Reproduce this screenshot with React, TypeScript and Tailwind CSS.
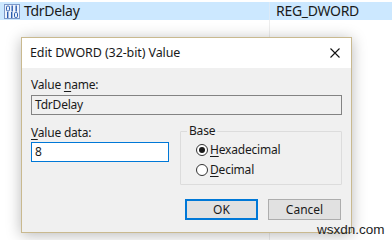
import React from "react"

const ui = "font-['Noto_Sans',sans-serif]"

function BinIcon() {
  // registry REG_DWORD icon: "011 / 110" bits in blue
  const zero = (x: number, y: number) => (
    <rect x={x + 0.5} y={y + 0.5} width={3} height={5} rx={1.2} fill="none" stroke="#2a5db0" strokeWidth={1} />
  )
  const one = (x: number, y: number) => <rect x={x + 1} y={y} width={1.4} height={6} fill="#2a5db0" />
  return (
    <svg width="16" height="15" viewBox="0 0 16 15">
      <rect x="0.5" y="0.5" width="15" height="14" fill="#eef3fb" stroke="#7c98c8" />
      {zero(2, 1.5)}
      {one(6.5, 1.5)}
      {one(10.5, 1.5)}
      {one(2, 8)}
      {one(6, 8)}
      {zero(10, 8)}
    </svg>
  )
}

function Radio({ checked, label, hot }: { checked?: boolean; label: string; hot: number }) {
  return (
    <div className="flex h-[16px] items-center gap-[2px] leading-[16px]">
      <span className="flex h-[12px] w-[12px] items-center justify-center rounded-full border border-[#333] bg-white">
        {checked && <span className="h-[6px] w-[6px] rounded-full bg-[#1a1a1a]" />}
      </span>
      <span>
        {label.slice(0, hot)}
        <span className="underline underline-offset-2">{label[hot]}</span>
        {label.slice(hot + 1)}
      </span>
    </div>
  )
}

export default function App() {
  return (
    <div className={`relative h-[240px] w-[392px] overflow-hidden bg-white text-[#1a1a1a] ${ui}`}>
      {/* list view behind */}
      <div className="flex h-full flex-col pt-[2px]">
        <div className="flex h-[18px] bg-[#cce8ff] text-[14px] leading-[18px]">
          <div className="flex w-[270px] items-center gap-[4px] border-r border-[#dceaf7] pl-[4px]">
            <BinIcon />
            <span className="tracking-[-0.3px]">TdrDelay</span>
          </div>
          <div className="pl-[6px] tracking-[-0.3px]">REG_DWORD</div>
        </div>
        <div className="flex flex-1">
          <div className="w-[270px] border-r border-[#eeeeee]" />
        </div>
      </div>

      {/* dialog */}
      <div className="absolute left-[21px] top-[37px] flex h-[196px] w-[331px] flex-col border border-[#c9b98f] bg-[#f0f0f0] text-[12px] shadow-[0_2px_14px_rgba(0,0,0,0.28)]">
        <div className="flex h-[30px] items-center justify-between bg-white pl-[8px] pr-[11px]">
          <span className="text-[12.5px] tracking-[-0.1px]">Edit DWORD (32-bit) Value</span>
          <svg width="10" height="10" viewBox="0 0 10 10">
            <path d="M0.5 0.5 L9.5 9.5 M9.5 0.5 L0.5 9.5" stroke="#111" strokeWidth="1.1" />
          </svg>
        </div>
        <div className="flex flex-1 flex-col px-[9px] pt-[9px]">
          <div className="h-[16px] leading-[16px] tracking-[-0.2px]">
            Value <span className="underline underline-offset-2">n</span>ame:
          </div>
          <div className="mt-[2px] flex h-[20px] items-center border border-[#838383] bg-[#f0f0f0] pl-[3px] tracking-[-0.2px]">
            TdrDelay
          </div>
          <div className="mt-[16px] flex justify-between">
            <div className="flex w-[138px] flex-col">
              <div className="-mt-[6px] h-[16px] leading-[16px] tracking-[-0.2px]">
                <span className="underline underline-offset-2">V</span>alue data:
              </div>
              <div className="mt-[1px] flex h-[20px] items-center border border-[#0078d7] bg-white pl-[3px]">
                8
              </div>
            </div>
            <div className="relative h-[54px] w-[162px] rounded-[1px] border border-[#dcdcdc]">
              <span className="absolute -top-[9px] left-[6px] bg-[#f0f0f0] px-[2px] leading-[16px] tracking-[-0.2px]">
                Base
              </span>
              <div className="flex flex-col gap-[4px] pl-[15px] pt-[10px] tracking-[-0.2px]">
                <Radio checked label="Hexadecimal" hot={0} />
                <Radio label="Decimal" hot={0} />
              </div>
            </div>
          </div>
          <div className="mt-[14px] flex justify-end gap-[10px] pr-[1px]">
            <button className="h-[21px] w-[73px] border-2 border-[#0078d7] bg-[#e1e1e1] leading-[17px]">OK</button>
            <button className="h-[21px] w-[73px] border border-[#adadad] bg-[#e1e1e1] leading-[19px]">Cancel</button>
          </div>
        </div>
      </div>

      <div className="absolute left-[317px] top-[222px] font-['Liberation_Sans',sans-serif] text-[13.5px] leading-[16px] text-[#222]">
        wsxdn.com
      </div>
    </div>
  )
}
